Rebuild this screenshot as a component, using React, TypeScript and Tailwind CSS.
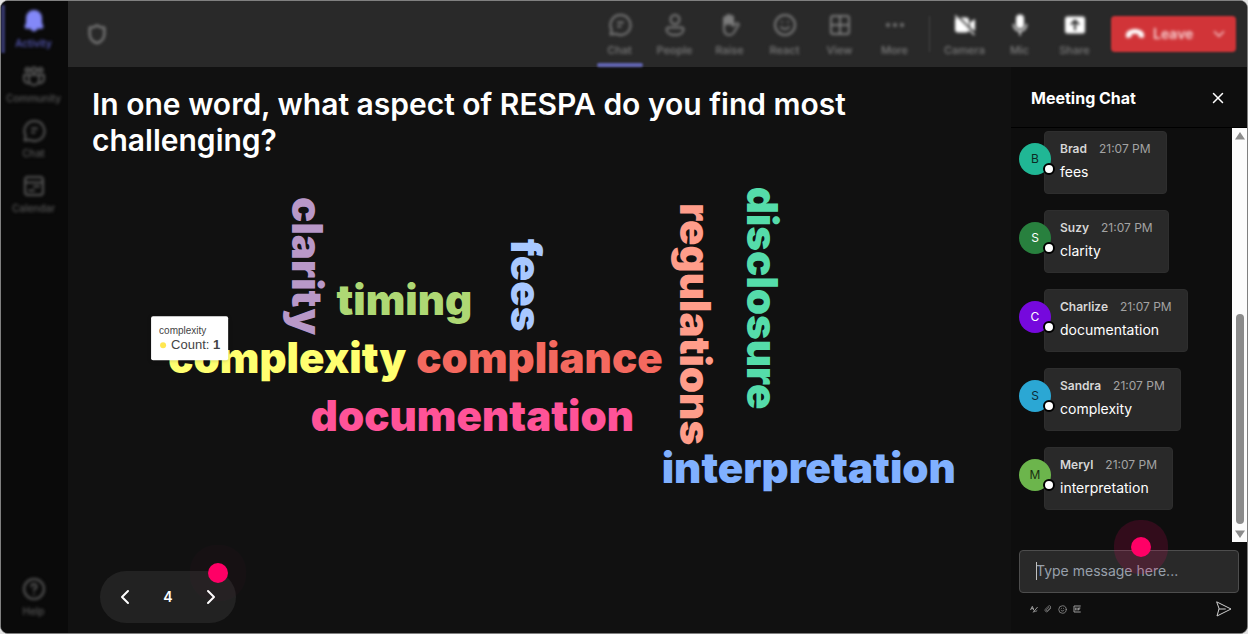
import { useState } from "react";
import type { ReactNode } from "react";
import { ChevronDown, ChevronLeft, ChevronRight, Ellipsis, Grid2x2, Smile, X } from "lucide-react";

type Word = {
  text: string;
  x: number;
  y: number;
  color: string;
  vertical?: boolean;
};

type Message = {
  name: string;
  time: string;
  text: string;
  avatar: string;
};

// x / y is the middle of the word on its baseline
const words: Word[] = [
  { text: "clarity", x: 200, y: 96, color: "#b898c8", vertical: true },
  { text: "fees", x: 419, y: 115, color: "#a8c8ff", vertical: true },
  { text: "regulations", x: 587, y: 154, color: "#ff9d8a", vertical: true },
  { text: "disclosure", x: 654, y: 128, color: "#55dcaa", vertical: true },
  { text: "timing", x: 312, y: 145, color: "#aed874" },
  { text: "complexity", x: 195, y: 203, color: "#ffff70" },
  { text: "compliance", x: 447, y: 203, color: "#f4695f" },
  { text: "documentation", x: 380, y: 261, color: "#ff5398" },
  { text: "interpretation", x: 716, y: 313, color: "#80b0ff" },
];

const messages: Message[] = [
  { name: "Brad", time: "21:07 PM", text: "fees", avatar: "bg-[#20b795] text-[#0b2a24]" },
  { name: "Suzy", time: "21:07 PM", text: "clarity", avatar: "bg-[#28803e] text-white" },
  { name: "Charlize", time: "21:07 PM", text: "documentation", avatar: "bg-[#7609dd] text-white" },
  { name: "Sandra", time: "21:07 PM", text: "complexity", avatar: "bg-[#2ba7d4] text-[#0b2a38]" },
  { name: "Meryl", time: "21:07 PM", text: "interpretation", avatar: "bg-[#6cb54c] text-[#1a2e10]" },
];

function Icon({ children, className = "size-6" }: { children: ReactNode; className?: string }) {
  return (
    <svg
      viewBox="0 0 24 24"
      className={className}
      fill="none"
      stroke="currentColor"
      strokeWidth={2}
      strokeLinecap="round"
      strokeLinejoin="round"
      aria-hidden="true"
    >
      {children}
    </svg>
  );
}

function ChatIcon() {
  return (
    <Icon>
      <path d="M12.5 2a10 10 0 1 1-4.7 18.8L2.6 21.6l1-4.9A10 10 0 0 1 12.5 2z" />
      <path d="M10 9.5h5M10 13.5h2.5" />
    </Icon>
  );
}

function BellIcon() {
  return (
    <Icon>
      <path
        d="M12 2a7 7 0 0 0-7 7v5l-1.4 3.4c-.3.6.2 1.3.9 1.3h15c.7 0 1.2-.7.9-1.3L19 14V9a7 7 0 0 0-7-7z"
        fill="currentColor"
      />
      <path d="M9.5 19.5a2.6 2.6 0 0 0 5 0z" fill="currentColor" />
    </Icon>
  );
}

function CommunityIcon() {
  return (
    <Icon>
      <circle cx="12" cy="6" r="2.5" />
      <circle cx="5.500" cy="6" r="2" />
      <circle cx="18.500" cy="6" r="2" />
      <path d="M7 11h10v5a5 5 0 0 1-10 0z" />
      <path d="M7 11H2v4.500A4.500 4.500 0 0 0 7.500 19M17 11h5v4.500A4.500 4.500 0 0 1 16.500 19" />
    </Icon>
  );
}

function CalendarIcon() {
  return (
    <Icon>
      <rect x="3" y="3" width="18" height="18" rx="3" />
      <path d="M3 8.500h18M12 12.500h5M7 16.500h5" />
    </Icon>
  );
}

function HelpIcon() {
  return (
    <Icon>
      <circle cx="12" cy="12" r="10" />
      <path d="M9.500 9.500a2.500 2.500 0 1 1 3.500 2.300c-.7.4-1 .9-1 1.700M12 17v.1" />
    </Icon>
  );
}

function PersonIcon() {
  return (
    <Icon>
      <circle cx="12" cy="6.500" r="4.500" />
      <path d="M5.500 14.500h13a2 2 0 0 1 2 2c0 3.500-3.800 5.500-8.500 5.500s-8.500-2-8.500-5.500a2 2 0 0 1 2-2z" />
    </Icon>
  );
}

function RaiseIcon() {
  return (
    <Icon>
      <path d="M6 11V5.500a1.500 1.500 0 0 1 3 0V10 3.500a1.500 1.500 0 0 1 3 0V10 4.500a1.500 1.500 0 0 1 3 0V13l3-2.500c1-.8 2.800 0 2.800 1.300L17 17.500c-1 2.500-2.500 4.500-5.500 4.500C8 22 6 19.500 6 16z" />
      <path d="M7.500 5.500v6M10.500 3.500v8M13.500 4.500v7" />
    </Icon>
  );
}

function CameraOffIcon() {
  return (
    <Icon>
      <path d="M5 4.500h8a3 3 0 0 1 3 3v9a3 3 0 0 1-3 3H5a3 3 0 0 1-3-3v-9a3 3 0 0 1 3-3z" fill="currentColor" stroke="none" />
      <path d="M17 9.500 22 6v12l-5-3.500z" fill="currentColor" stroke="none" />
      <path d="M4 2.500 22 21" stroke="#292929" />
      <path d="M2.500 3 21 21.500" strokeWidth={1.5} />
    </Icon>
  );
}

function MicIcon() {
  return (
    <Icon>
      <rect x="8" y="1.500" width="8" height="14" rx="4" fill="currentColor" stroke="none" />
      <path d="M5.500 11.500a6.500 6.500 0 0 0 13 0M12 18v4" strokeWidth={1.5} />
    </Icon>
  );
}

function ShareIcon() {
  return (
    <Icon>
      <rect x="2" y="3.500" width="20" height="17" rx="2.500" fill="currentColor" stroke="none" />
      <path d="M12 16.500V8M8.500 11 12 7.500l3.500 3.500" stroke="#292929" />
    </Icon>
  );
}

function SideItem({ icon, label, active }: { icon: ReactNode; label: string; active?: boolean }) {
  return (
    <button
      type="button"
      className={
        active
          ? "flex w-full flex-col items-center border-l-4 border-[#35376a] py-1 pr-1 text-[#8388f8]"
          : "flex w-full flex-col items-center py-1 text-[#585858]"
      }
    >
      <span className="blur-[1px]">{icon}</span>
      <span
        className={
          active
            ? "mt-1 text-[10px] leading-3 font-medium text-[#5a5dc0] blur-[1px]"
            : "mt-1 text-[10px] leading-3 font-medium blur-[1px]"
        }
      >
        {label}
      </span>
    </button>
  );
}

function ToolItem({ icon, label, active, bright }: { icon: ReactNode; label: string; active?: boolean; bright?: boolean }) {
  return (
    <button type="button" className="flex h-full w-[55px] flex-col items-center pt-3 text-[#7c7c7c]">
      <span className={bright ? "text-white blur-[1px]" : "blur-[1px]"}>{icon}</span>
      <span className="mt-[7px] text-[11px] leading-3 font-medium blur-[1px]">{label}</span>
      {active && <span className="mt-auto h-1 w-[46px] rounded-sm bg-[#6266b4]" />}
    </button>
  );
}

function WordCloud() {
  return (
    <svg viewBox="0 0 894 370" className="w-full" role="img" aria-label="Word cloud">
      {words.map((word) => (
        <text
          key={word.text}
          textAnchor="middle"
          transform={`translate(${word.x} ${word.y})${word.vertical ? " rotate(90)" : ""}`}
          fill={word.color}
          className="font-['Inter',sans-serif] text-[42px] font-black"
        >
          {word.text}
        </text>
      ))}
      <g className="font-['Liberation_Sans',sans-serif]">
        <rect x="59" y="146" width="77" height="44" rx="2" fill="#fff" className="drop-shadow" />
        <text x="67" y="164" fill="#444" className="text-[10px]">
          complexity
        </text>
        <circle cx="71" cy="175" r="3" fill="#ffe750" />
        <text x="79" y="179" fill="#444" className="text-[13px]">
          Count: <tspan className="font-bold">1</tspan>
        </text>
      </g>
    </svg>
  );
}

function ChatMessage({ message }: { message: Message }) {
  return (
    <li className="flex">
      <div className={`relative z-10 mt-3 -mr-[7px] flex size-8 shrink-0 items-center justify-center rounded-full text-xs ${message.avatar}`}>
        {message.name[0]}
        <span className="absolute -right-1 bottom-0 size-3 rounded-full border-2 border-black bg-white" />
      </div>
      <div className="h-[63px] rounded border border-[#2e2e2e] bg-[#292929] px-[15px] pt-2">
        <div className="flex gap-3 text-xs leading-[18px]">
          <span className="font-semibold text-[#d6d6d6]">{message.name}</span>
          <span className="text-[#a3a3a3]">{message.time}</span>
        </div>
        <p className="mt-1 text-sm leading-5 text-white">{message.text}</p>
      </div>
    </li>
  );
}

function ScrollBar() {
  return (
    <div className="flex w-[15px] flex-col items-center justify-between bg-[#fcfcfc] py-1" aria-hidden="true">
      <svg viewBox="0 0 10 8" className="h-2 w-[10px]" fill="#8b8b8b">
        <path d="M5 0 10 7.500H0z" />
      </svg>
      <div className="mt-auto mb-[6px] h-[210px] w-2 rounded-full bg-[#8b8b8b]" />
      <svg viewBox="0 0 10 8" className="h-2 w-[10px]" fill="#8b8b8b">
        <path d="M5 8 10 .5H0z" />
      </svg>
    </div>
  );
}

function App() {
  const [slide, setSlide] = useState(4);
  const [draft, setDraft] = useState("");

  return (
    <div className="h-screen min-h-[634px] bg-[#e4e4e4] font-['Inter',sans-serif]">
      <div className="flex h-full overflow-hidden rounded-lg border border-[#808080] bg-[#111]">
        <nav className="w-[67px] shrink-0 bg-[#0a0a0a]">
          <div className="flex h-full flex-col gap-[7px] pt-1 pr-[2px] pb-3 blur-[1px]">
            <SideItem icon={<BellIcon />} label="Activity" active />
            <SideItem icon={<CommunityIcon />} label="Community" />
            <SideItem icon={<ChatIcon />} label="Chat" />
            <SideItem icon={<CalendarIcon />} label="Calendar" />
            <div className="mt-auto">
              <SideItem icon={<HelpIcon />} label="Help" />
            </div>
          </div>
        </nav>

        <div className="flex min-w-0 flex-1 flex-col">
          <header className="h-[66px] shrink-0 bg-[#292929]">
            <div className="flex h-full items-center pr-[11px] pl-[18px] blur-[1px]">
              <Icon className="size-[22px] text-[#7c7c7c] blur-[1px]">
                <path d="M12 2.500c2.500 2 5 2.500 8 2.500v7c0 5-3.500 8.500-8 10-4.500-1.500-8-5-8-10V5c3 0 5.500-.5 8-2.500z" strokeWidth={2.5} />
              </Icon>
              <div className="ml-auto flex h-full">
                <ToolItem icon={<ChatIcon />} label="Chat" active />
                <ToolItem icon={<PersonIcon />} label="People" />
                <ToolItem icon={<RaiseIcon />} label="Raise" />
                <ToolItem icon={<Smile />} label="React" />
                <ToolItem icon={<Grid2x2 />} label="View" />
                <ToolItem icon={<Ellipsis />} label="More" />
              </div>
              <div className="mx-[7px] h-9 w-px bg-[#444]" />
              <div className="flex h-full">
                <ToolItem icon={<CameraOffIcon />} label="Camera" bright />
                <ToolItem icon={<MicIcon />} label="Mic" bright />
                <ToolItem icon={<ShareIcon />} label="Share" bright />
              </div>
              <button
                type="button"
                className="ml-[9px] flex h-9 w-[125px] items-center rounded-sm bg-[#d13438] pr-2 pl-[14px] text-sm font-semibold text-[#f8d4d5]"
              >
                <svg viewBox="0 0 24 14" className="mr-2 h-3 w-5 blur-[1px]" fill="#fff" aria-hidden="true">
                  <path d="M12 1C6.500 1 1 3.500 1 8.500 1 11 2 12 3.500 11.700l3-.7c1-.2 1.500-1 1.500-2V7.200c2.500-.8 5.500-.8 8 0V9c0 1 .5 1.800 1.500 2l3 .7c1.500.3 2.500-.7 2.500-3.200C23 3.500 17.500 1 12 1z" />
                </svg>
                <span className="blur-[1px]">Leave</span>
                <ChevronDown className="ml-auto size-[18px] blur-[1px]" />
              </button>
            </div>
          </header>

          <div className="flex min-h-0 flex-1">
            <main className="flex min-w-0 flex-1 flex-col px-6 pt-[19px]">
              <h1 className="text-[30px] leading-9 font-semibold text-white">
                In one word, what aspect of RESPA do you find most challenging?
              </h1>
              <div className="mt-3">
                <WordCloud />
              </div>
              <div className="relative mt-auto mb-[10px] ml-2 flex h-[52px] w-[136px] items-center justify-between rounded-full bg-[#222] px-[13px] text-white">
                <button type="button" aria-label="Previous" onClick={() => setSlide(slide - 1)}>
                  <ChevronLeft />
                </button>
                <span className="text-sm font-semibold">{slide}</span>
                <button type="button" aria-label="Next" onClick={() => setSlide(slide + 1)}>
                  <ChevronRight />
                </button>
                <span className="absolute -top-2 right-2 size-5 rounded-full bg-[#ff0066] ring-[18px] ring-[#ff0066]/2" />
              </div>
            </main>

            <aside className="flex w-[236px] shrink-0 flex-col bg-[#0e0e0e]">
              <div className="flex h-[61px] shrink-0 items-center justify-between border-b border-black pt-[2px] pr-5 pl-5 text-white">
                <h2 className="text-base font-bold">Meeting Chat</h2>
                <button type="button" aria-label="Close chat">
                  <X className="size-[18px]" />
                </button>
              </div>
              <div className="flex min-h-0 flex-1">
                <ul className="flex flex-1 flex-col gap-4 overflow-hidden pt-[3px] pl-2">
                  {messages.map((message) => (
                    <ChatMessage key={message.name} message={message} />
                  ))}
                </ul>
                <ScrollBar />
              </div>
              <div className="relative px-2 pt-2 pb-4">
                <input
                  type="text"
                  aria-label="Message"
                  placeholder="Type message here..."
                  value={draft}
                  onChange={(e) => setDraft(e.target.value)}
                  className="h-[43px] w-full rounded border border-[#4d4d4d] bg-[#292929] px-4 pb-[2px] text-sm text-white outline-none placeholder:text-[#98a0ab]"
                />
                <span className="absolute top-5 left-[25px] h-[18px] w-px bg-[#c0c0c0]" />
                <span className="pointer-events-none absolute -top-[5px] left-[120px] size-5 rounded-full bg-[#ff0066] ring-[17px] ring-[#ff0066]/15" />
                <div className="flex items-center gap-[6px] pt-2 pr-[7px] pl-[11px] text-[#9a9a9a]">
                  <button type="button" aria-label="Format">
                    <Icon className="size-2">
                      <path d="M2 14 7 4l4 11M4 11h6M10 21 22 7M12 21c4-5 6 0 9-4" strokeWidth={3} />
                    </Icon>
                  </button>
                  <button type="button" aria-label="Attach">
                    <Icon className="size-2">
                      <path d="M20 10 11 19.500a5 5 0 0 1-7-7L13 3.500a4 4 0 0 1 6 5.500L10.500 17a2 2 0 0 1-3-3l7-7" />
                    </Icon>
                  </button>
                  <button type="button" aria-label="Emoji">
                    <Smile className="size-[9px]" />
                  </button>
                  <button type="button" aria-label="GIF">
                    <Icon className="size-2">
                      <path d="M22 3H3v18h19M8 9v6M12 9v6M16 15V9h5M16 12h4" strokeWidth={3} />
                    </Icon>
                  </button>
                  <button type="button" aria-label="Send" className="ml-auto text-[#d0d0d0]">
                    <Icon className="size-4">
                      <path d="M1.500 1.500 22.500 12 1.500 22.500 4.500 12zM4.500 12H14" strokeWidth={1.5} />
                    </Icon>
                  </button>
                </div>
              </div>
            </aside>
          </div>
        </div>
      </div>
    </div>
  );
}

export default App;
